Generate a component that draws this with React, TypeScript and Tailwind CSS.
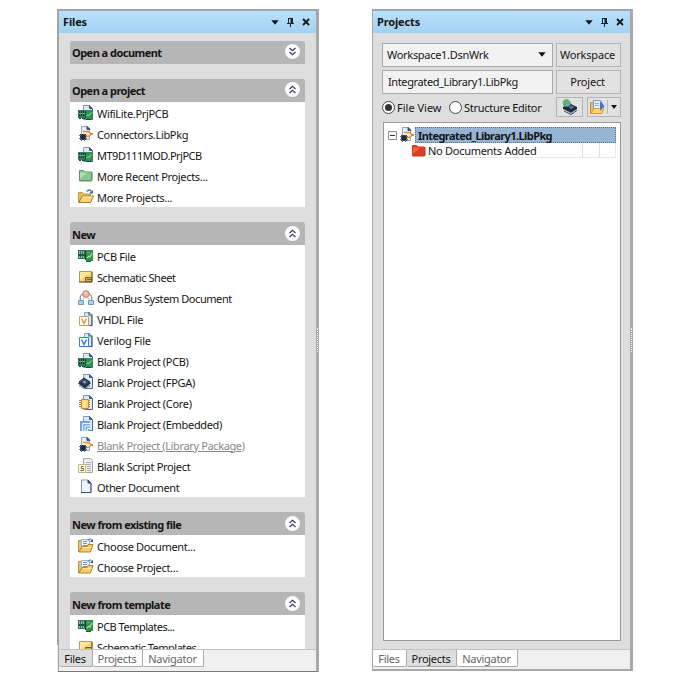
import type { ReactNode } from 'react';

function Svg({ children, w = 16, h = 16 }: { children: ReactNode; w?: number; h?: number }) {
  return (
    <svg width={w} height={h} viewBox={`0 0 ${w} ${h}`} fill="none" className="block shrink-0">
      {children}
    </svg>
  );
}

// Sheet of paper with a folded corner, drawn behind most project icons
function Sheet() {
  return (
    <>
      <path d="M5.5.5h6l3 3v11h-9z" fill="#dfe9f7" stroke="#8498b8" />
      <path d="M11.5.5v3h3z" fill="#3e5c8c" stroke="#3e5c8c" />
      <path d="M14.5 4v10.500h-7" stroke="#4c668f" />
    </>
  );
}

function PcbProjectIcon() {
  return (
    <Svg>
      <Sheet />
      <path d="M0 5h8v8H0z" fill="#2f7d5a" />
      <path d="M7 5h7v9H7z" fill="#2c9450" />
      <path d="M1.500 6v5M3.500 6v5M5.500 6v5" stroke="#173a3c" />
      <path d="M0 8.500h7" stroke="#67a98a" />
      <path d="M8 11.500l2-2 1 1 2.500-3" stroke="#c0e284" />
      <path d="M1 13.500h2M4 13.500h3M8 14.500h5M7.500 6v7" stroke="#164438" />
    </Svg>
  );
}

function PcbIcon() {
  return (
    <Svg>
      <path d="M0 2h9v9H0z" fill="#2f7358" />
      <path d="M8 2h7v11H8z" fill="#2c9450" />
      <path d="M1.500 3v3M3.500 3v3M5.500 3v3M1.500 8v2M3.500 8v2M5.500 8v2" stroke="#8fc0a2" />
      <path d="M0 7h7M7.500 3v9" stroke="#123c38" />
      <path d="M9 10l2-2 1 1 2-4" stroke="#b6df75" strokeWidth="1.200" />
      <path d="M9 4.500h3" stroke="#69b87b" />
      <path d="M8 13.500h5" stroke="#15562f" />
    </Svg>
  );
}

function LibraryIcon() {
  return (
    <Svg>
      <path d="M3.500.5h6l2 2v11h-8z" fill="#e9f0fa" stroke="#91a3c0" />
      <path d="M9 .5v3h3z" fill="#304f7c" stroke="#304f7c" />
      <path d="M5 5.500h4.500c2 0 2.500 1 3.500 2.500-1 2-1.500 2.500-3.500 2.500H8" fill="#fff2dc" stroke="#ed8b2d" strokeWidth="1.500" />
      <path d="M13 8h2" stroke="#d76623" strokeWidth="1.500" />
      <path d="M2 8h6v6H2z" fill="#313846" />
      <path d="M1 9.500h8M1 12.500h8M3.500 8v7M6.500 8v7" stroke="#5d6e91" />
      <path d="M3 9h4v4H3z" fill="#222a37" />
    </Svg>
  );
}

function FolderIcon({ color, edge, light }: { color: string; edge: string; light: string }) {
  return (
    <Svg>
      <path d="M1.500 2.500h4l1.500 1.500h6.500v9H1.500z" fill={color} stroke={edge} />
      <path d="M2 4.500h7L2 11z" fill={light} />
      <path d="M2 12.500h12V4" stroke={edge} />
    </Svg>
  );
}

function OpenFolderIcon() {
  return (
    <Svg>
      <path d="M.5 13.500v-10h4l1 1.500h7v3" fill="#e8c16b" stroke="#c09648" />
      <path d="M1 13.500l3-6.500h11.500l-3 6.500z" fill="#ffd777" stroke="#a97b29" />
      <path d="M4.500 8h10" stroke="#fff0ae" />
      <path d="M8.500 2.500c2-2 4-2 5 0" stroke="#5878a8" strokeWidth="1.300" />
      <path d="M15 1v3.500h-4z" fill="#416394" />
    </Svg>
  );
}

function ChooseIcon() {
  return (
    <Svg>
      <path d="M.5 14V2.500h4V14" fill="#eac36b" stroke="#ba923f" />
      <path d="M3.500 1.500h8v9h-8z" fill="#f3f7fc" stroke="#9daec6" />
      <path d="M5 3.500h4M5 5.500h4M5 7.500h4" stroke="#7790b5" />
      <path d="M10 2.500c1-2 3-2 4 0" stroke="#385d93" />
      <path d="M15 1v3h-3z" fill="#294f85" />
      <path d="M1 14l3-5.500h5l1-2h5l-2.500 7.500z" fill="#f9cb64" stroke="#b18331" />
      <path d="M4.500 9.500h9" stroke="#ffecaa" />
    </Svg>
  );
}

function SchematicIcon() {
  return (
    <Svg>
      <path d="M1.500 2.500h12.500v10.500H1.500z" fill="#fbd66d" stroke="#b4975d" />
      <path d="M2 3h11L2 11z" fill="#ffe79c" />
      <path d="M14 3v10H1" stroke="#5f543d" />
      <path d="M7.500 8.500h6v4h-6z" fill="#e0ab4a" stroke="#735b37" />
      <path d="M9 10.500h4" stroke="#735b37" />
    </Svg>
  );
}

function OpenBusIcon() {
  return (
    <Svg>
      <path d="M5 4C2 5 2 8 2.500 10M11 4c3 1 3 4 2.500 6" stroke="#8795a2" strokeWidth="1.300" />
      <circle cx="8" cy="4" r="3.300" fill="#efb6a2" stroke="#b57c69" />
      <path d="M6 3h3" stroke="#ffe4d9" />
      <path d="M.5 10.500h5v4h-5zM10.500 10.500h5v4h-5z" fill="#a7d6ed" stroke="#6f9ab6" />
      <path d="M5 9.500l1.500-2M11 9.500L9.500 7.500" stroke="#929ca5" />
    </Svg>
  );
}

function HdlIcon({ color }: { color: string }) {
  return (
    <Svg>
      <path d="M6.500 1.500h5l2 2v11h-7z" fill="#dbe6f5" stroke="#899fbe" />
      <path d="M11 1v3h3v10.500h-3" stroke="#3f5a84" strokeWidth="1.200" />
      <path d="M1.500 5.500h9v9h-9z" fill="#fff" stroke={color} />
      <path d="M3.500 7.500L6 12.500l2.500-5" stroke={color} strokeWidth="1.500" />
    </Svg>
  );
}

function FpgaIcon() {
  return (
    <Svg>
      <Sheet />
      <path d="M0 9.500L6 5l7 4-6 5.500z" fill="#26374b" />
      <path d="M1 8l5-4 6 4-5.500 4z" fill="#33475e" stroke="#1f3045" />
      <path d="M4.500 8L6 6.500 8.500 8 7 9.500z" fill="#92a6bc" />
      <path d="M2 11v2M4 12v2M9 13v1M11 11v2" stroke="#4d6987" />
    </Svg>
  );
}

function CoreIcon() {
  return (
    <Svg>
      <Sheet />
      <path d="M1 5.500h11M1 7.500h11M1 9.500h11M1 11.500h11" stroke="#b77837" />
      <path d="M3.500 4.500h7v9h-7z" fill="#ffd66c" stroke="#c08b35" />
      <path d="M5 6h3v6H5z" fill="#ffe8a3" />
    </Svg>
  );
}

function EmbeddedIcon() {
  return (
    <Svg>
      <Sheet />
      <path d="M2 5h10v10H2z" fill="#7fb1ee" />
      <path d="M4.500 15V7.500H12M7 15v-5h5M9.500 15v-2.500H12" stroke="#e8f3ff" />
      <path d="M2.500 15V5.500H12" stroke="#6c9ade" />
    </Svg>
  );
}

function ScriptIcon() {
  return (
    <Svg>
      <path d="M5.500.5h7l2 2v12h-9z" fill="#f0f0ee" stroke="#a6a6a3" />
      <path d="M8 4.500h5M8 6.500h5M9 8.500h4M9 10.500h4M9 12.500h4" stroke="#aaa" />
      <path d="M.5 6.500h7v8h-7z" fill="#fff8e9" stroke="#d5b277" />
      <path d="M5.500 8.500h-2v2h2v2h-3" stroke="#74684e" />
    </Svg>
  );
}

function DocumentIcon() {
  return (
    <Svg>
      <path d="M3.500 1h6.500l3 3v9.500h-9.500z" fill="#eef4fd" stroke="#879bb8" />
      <path d="M10 1v3h3z" fill="#2f4c7c" stroke="#2f4c7c" />
      <path d="M3 13.500h10V4" stroke="#324d76" />
    </Svg>
  );
}

function LayersIcon() {
  return (
    <Svg>
      <path d="M1 8l6-4 8 4v2l-6 4-8-4z" fill="#202b3c" />
      <path d="M1.500 10.500l7.500 4 6-4" stroke="#a3b9d0" />
      <path d="M2 12l7 3.500 6-4" stroke="#3b5270" />
      <path d="M6.500 8.500l3-2 3 1.500-3 2z" fill="#5d7490" />
      <circle cx="4.500" cy="4" r="3.800" fill="#66abd4" />
      <path d="M2 2l3-2 2 2-2 2-2 3-2-2zM6 4l3-1v2L7 7z" fill="#5cb551" />
    </Svg>
  );
}

function PageFolderIcon() {
  return (
    <Svg w={18}>
      <path d="M1.500 3.500h4v11h-4z" fill="#eabf5e" stroke="#c49235" />
      <path d="M4.500 1.500h7l2 3v8h-9z" fill="#e8f2ff" stroke="#739cd2" />
      <path d="M6 4.500h4M6 6.500h4" stroke="#88abd9" />
      <path d="M2 14.500l3-5h5l1-1h4l-2 6z" fill="#ffd36f" stroke="#d29c3b" />
      <path d="M11 2l4.500 5-4.500 5z" fill="#3e75da" />
    </Svg>
  );
}

function Chevrons({ down }: { down?: boolean }) {
  return (
    <span className="-mt-[2px] flex size-[15px] items-center justify-center rounded-full bg-[#fdfdff]">
      <svg width="9" height="9" viewBox="0 0 9 9" fill="none" stroke="#33407f" strokeWidth="1.300" className={down ? 'rotate-180' : ''}>
        <path d="M1.500 4l3-2.700 3 2.700M1.500 8l3-2.700 3 2.700" />
      </svg>
    </span>
  );
}

function Caret() {
  return (
    <svg width="8" height="5" viewBox="0 0 8 5" className="block">
      <path d="M.3.300h7.400L4 4.700z" fill="#151515" />
    </svg>
  );
}

// Dotted grip on the outer edge of a panel
function Grip() {
  return <div className="absolute top-[317px] -right-[2px] h-[24px] border-l border-dotted border-white" />;
}

function TitleBar({ title }: { title: string }) {
  return (
    <div className="flex h-[22px] shrink-0 items-center justify-between bg-linear-to-b from-[#b9e1fd] to-[#a2d1f0] pr-[6px] pl-1">
      <span className="-mt-[2px] font-bold tracking-[-0.15px]">{title}</span>
      <div className="flex items-center gap-2">
        <Caret />
        <svg width="7" height="9" viewBox="0 0 7 9" fill="none" className="block">
          <path d="M1 .5h5M1.500 0v5M0 5.500h7M3.500 5v4" stroke="#222" />
          <path d="M3.500 1H6v4H3.500z" fill="#222" />
        </svg>
        <svg width="8" height="8" viewBox="0 0 8 8" fill="none" className="block">
          <path d="M1 1l6 6M7 1L1 7" stroke="#171717" strokeWidth="1.800" />
        </svg>
      </div>
    </div>
  );
}

type Item = { icon: ReactNode; label: string; active?: boolean; tracking?: string };

const sections: { title: string; items: Item[]; collapsed?: boolean }[] = [
  { title: 'Open a document', items: [], collapsed: true },
  {
    title: 'Open a project',
    items: [
      { icon: <PcbProjectIcon />, label: 'WifiLite.PrjPCB' },
      { icon: <LibraryIcon />, label: 'Connectors.LibPkg' },
      { icon: <PcbProjectIcon />, label: 'MT9D111MOD.PrjPCB', tracking: 'tracking-[-0.5px]' },
      { icon: <FolderIcon color="#8bc78c" edge="#609466" light="#b5dfb1" />, label: 'More Recent Projects...' },
      { icon: <OpenFolderIcon />, label: 'More Projects...', tracking: 'tracking-[-0.3px]' },
    ],
  },
  {
    title: 'New',
    items: [
      { icon: <PcbIcon />, label: 'PCB File' },
      { icon: <SchematicIcon />, label: 'Schematic Sheet', tracking: 'tracking-[-0.43px]' },
      { icon: <OpenBusIcon />, label: 'OpenBus System Document', tracking: 'tracking-[-0.43px]' },
      { icon: <HdlIcon color="#d99b4f" />, label: 'VHDL File' },
      { icon: <HdlIcon color="#2c85e4" />, label: 'Verilog File', tracking: 'tracking-[-0.25px]' },
      { icon: <PcbProjectIcon />, label: 'Blank Project (PCB)' },
      { icon: <FpgaIcon />, label: 'Blank Project (FPGA)' },
      { icon: <CoreIcon />, label: 'Blank Project (Core)' },
      { icon: <EmbeddedIcon />, label: 'Blank Project (Embedded)' },
      { icon: <LibraryIcon />, label: 'Blank Project (Library Package)', active: true, tracking: 'tracking-[-0.37px]' },
      { icon: <ScriptIcon />, label: 'Blank Script Project' },
      { icon: <DocumentIcon />, label: 'Other Document' },
    ],
  },
  {
    title: 'New from existing file',
    items: [
      { icon: <ChooseIcon />, label: 'Choose Document...' },
      { icon: <ChooseIcon />, label: 'Choose Project...', tracking: 'tracking-[-0.3px]' },
    ],
  },
  {
    title: 'New from template',
    items: [
      { icon: <PcbIcon />, label: 'PCB Templates...', tracking: 'tracking-[-0.5px]' },
      { icon: <SchematicIcon />, label: 'Schematic Templates...', tracking: 'tracking-[-0.5px]' },
    ],
  },
];

function Tabs({ active }: { active: string }) {
  return (
    <div className="flex h-5 shrink-0 items-start border-t border-[#c4c4c4] bg-[#f0f0f0] tracking-[-0.3px]">
      {['Files', 'Projects', 'Navigator'].map(tab => (
        <div
          key={tab}
          className={`flex h-[17px] items-center justify-center rounded-b-[2px] border-r border-b border-[#aaa] pr-px ${
            tab === 'Files' ? 'w-[34px]' : tab === 'Projects' ? 'w-[50px]' : 'w-[61px]'
          } ${tab === active ? 'bg-[#dedede] text-[#151515]' : 'bg-white text-[#666]'}`}
        >
          {tab}
        </div>
      ))}
    </div>
  );
}

function FilesPanel() {
  return (
    <div className="relative flex h-[663px] w-[262px] flex-col border-t-2 border-r-[3px] border-b border-l-2 border-t-[#a4a4a4] border-r-[#a8a8a8] border-b-[#777] border-l-[#a4a4a4] bg-[#f0f0f0]">
      <TitleBar title="Files" />
      <div className="flex h-[616px] shrink-0 flex-col gap-[15px] overflow-hidden bg-[#dedede] pt-2 pr-[11px] pl-[11px]">
        {sections.map((section, i) => (
          <div key={section.title} className="shrink-0">
            <div className={`flex h-[23px] items-center justify-between rounded-t-[3px] bg-[#b6b6b6] pr-[5px] pl-[2px] ${i < 2 ? 'pb-px' : 'pt-px'}`}>
              <span className="font-bold tracking-[-0.53px]">{section.title}</span>
              <Chevrons down={section.collapsed} />
            </div>
            <div className="bg-white">
              {section.items.map(item => (
                <div key={item.label} className="flex h-[21px] items-center gap-[3px] pl-2">
                  {item.icon}
                  <span className={`pt-px ${item.tracking ?? 'tracking-[-0.33px]'} ${item.active ? 'text-[#888] underline' : ''}`}>
                    {item.label}
                  </span>
                </div>
              ))}
            </div>
          </div>
        ))}
      </div>
      <Tabs active="Files" />
      <Grip />
      <div className="absolute -bottom-px -left-[2px] h-[27px] w-px bg-[#f0f0f0]" />
    </div>
  );
}

function ProjectsPanel() {
  return (
    <div className="relative flex h-[662px] w-[261px] flex-col border-t-2 border-r-[3px] border-b-[3px] border-l border-t-[#a4a4a4] border-r-[#a8a8a8] border-b-[#a8a8a8] border-l-[#a4a4a4] bg-[#f0f0f0]">
      <TitleBar title="Projects" />
      <div className="flex h-[616px] shrink-0 flex-col bg-[#dedede] pt-[10px] pr-[9px] pl-[9px]">
        <div className="flex gap-[3px]">
          <div className="flex h-6 w-[171px] items-center justify-between border border-[#a9a9a9] bg-[#f2f2f2] pr-[6px] pb-px pl-1">
            <span className="tracking-[-0.3px]">Workspace1.DsnWrk</span>
            <Caret />
          </div>
          <div className="flex h-6 w-[65px] items-center justify-center border border-[#b4b4b4] bg-[#e2e2e2] pr-[2px] pb-px tracking-[-0.2px]">Workspace</div>
        </div>
        <div className="mt-[3px] flex gap-[3px]">
          <div className="flex h-6 w-[171px] items-center border border-[#a9a9a9] bg-[#f2f2f2] pb-[2px] pl-[5px] tracking-[-0.38px]">
            Integrated_Library1.LibPkg
          </div>
          <div className="flex h-6 w-[65px] items-center justify-center border border-[#b4b4b4] bg-[#e2e2e2] pr-[2px] pb-[2px] tracking-[-0.2px]">Project</div>
        </div>
        <div className="mt-[3px] flex h-5 items-center">
          <span className="flex size-[13px] items-center justify-center rounded-full border border-[#444] bg-white">
            <span className="size-[7px] rounded-full bg-[#333]" />
          </span>
          <span className="ml-[2px] w-[52px]">File View</span>
          <span className="size-[13px] rounded-full border border-[#444] bg-white" />
          <span className="ml-[2px] w-[92px] tracking-[-0.26px]">Structure Editor</span>
          <div className="flex h-5 w-[27px] items-center justify-center border border-[#b4b4b4] bg-[#e2e2e2]">
            <LayersIcon />
          </div>
          <div className="ml-1 flex h-5 w-[34px] items-center border border-[#b4b4b4] bg-[#e2e2e2] pl-px">
            <PageFolderIcon />
            <span className="mr-[3px] h-[14px] w-px bg-[#b8b8b8]" />
            <svg width="6" height="4" viewBox="0 0 6 4" className="shrink-0"><path d="M0 0h6L3 4z" fill="#111" /></svg>
          </div>
        </div>
        <div className="mt-[5px] ml-px h-[519px] w-[238px] border border-[#999] bg-white pt-1 pl-1">
          <div className="flex h-4 items-center">
            <svg width="9" height="9" viewBox="0 0 9 9" fill="none" className="mr-[2px] shrink-0">
              <path d="M.5.5h8v8h-8z" fill="#fff" stroke="#8b8b8b" />
              <path d="M2 4.500h5" stroke="#333" />
            </svg>
            <LibraryIcon />
            <div className="flex h-4 w-[201px] shrink-0 items-center border border-dotted border-[#56708d] bg-[#97b4d3] pl-[2px] font-bold tracking-[-0.58px]">
              Integrated_Library1.LibPkg
            </div>
          </div>
          <div className="flex h-[15px] items-center pl-[23px]">
            <FolderIcon color="#dd3e23" edge="#c93a20" light="#f06a4b" />
            <div className="flex h-[15px] w-[189px] items-center border-r border-b border-[#e8e8e8] pl-px">
              <span className="w-[154px] tracking-[-0.28px]">No Documents Added</span>
              <span className="h-full w-[18px] border-x border-[#e0e0e0]" />
            </div>
          </div>
        </div>
      </div>
      <Tabs active="Projects" />
      <Grip />
    </div>
  );
}

export default function App() {
  return (
    <div className="flex h-[690px] w-[700px] items-start gap-[53px] overflow-hidden bg-white pt-[9px] pl-[57px] font-['Noto_Sans',sans-serif] text-[11px] leading-[15px] whitespace-nowrap text-[#151515]">
      <FilesPanel />
      <ProjectsPanel />
    </div>
  );
}
